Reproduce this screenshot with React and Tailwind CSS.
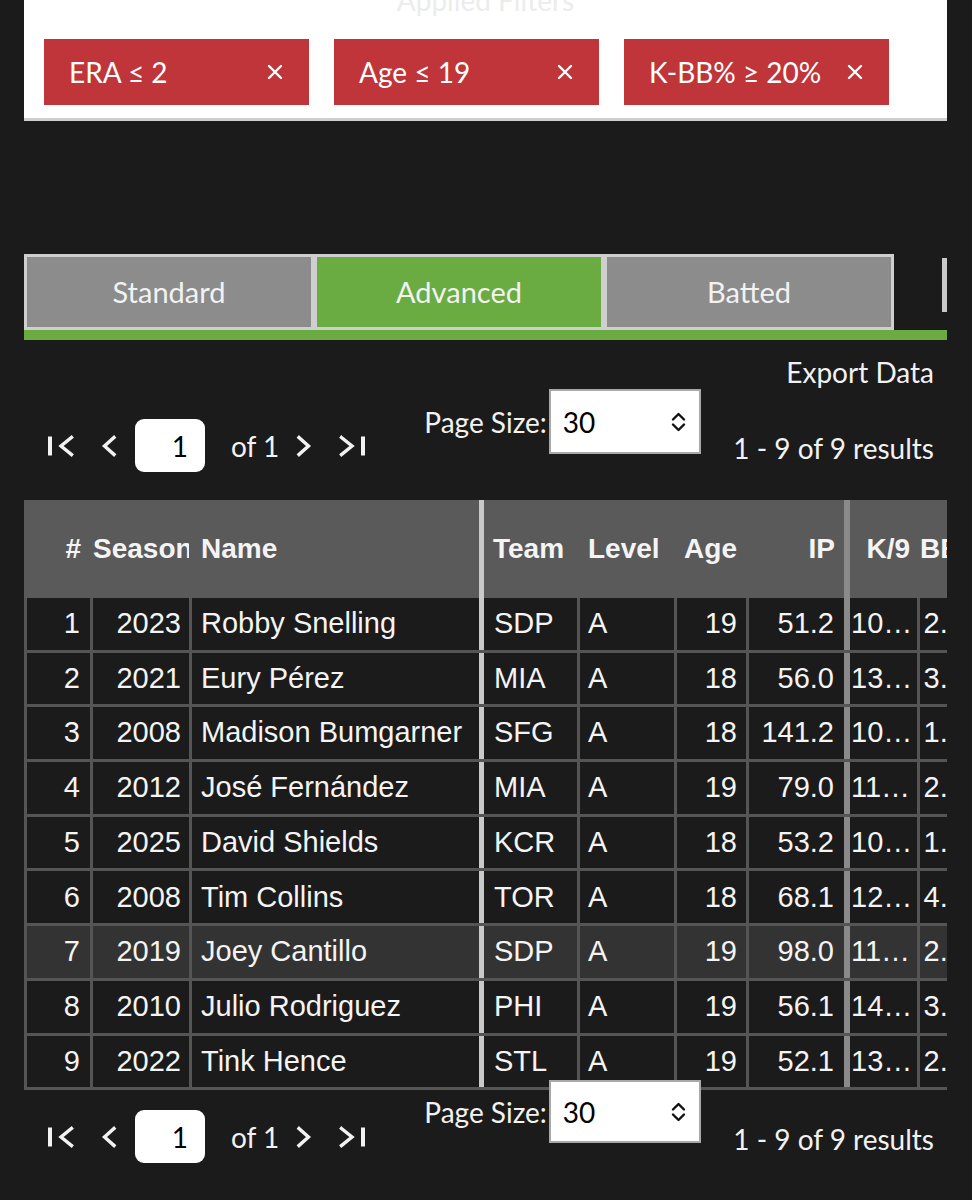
import { useState } from 'react'

const filtros = ['ERA ≤ 2', 'Age ≤ 19', 'K-BB% ≥ 20%']
const abas = ['Standard', 'Advanced', 'Batted']

const linhas = [
  [1, 2023, 'Robby Snelling', 'SDP', 'A', 19, '51.2', '10.56', '2.64'],
  [2, 2021, 'Eury Pérez', 'MIA', 'A', 18, '56.0', '13.18', '3.21'],
  [3, 2008, 'Madison Bumgarner', 'SFG', 'A', 18, '141.2', '10.34', '1.87'],
  [4, 2012, 'José Fernández', 'MIA', 'A', 19, '79.0', '11.73', '2.51'],
  [5, 2025, 'David Shields', 'KCR', 'A', 18, '53.2', '10.96', '1.52'],
  [6, 2008, 'Tim Collins', 'TOR', 'A', 18, '68.1', '12.66', '4.23'],
  [7, 2019, 'Joey Cantillo', 'SDP', 'A', 19, '98.0', '11.39', '2.94'],
  [8, 2010, 'Julio Rodriguez', 'PHI', 'A', 19, '56.1', '14.12', '3.68'],
  [9, 2022, 'Tink Hence', 'STL', 'A', 19, '52.1', '13.44', '2.78'],
]

// largura, borda e alinhamento de cada coluna
const colunas = [
  { titulo: '#', w: 'w-[66px]', borda: 'border-r-[3px] border-[#555]', th: 'text-right pr-[9px]', td: 'text-right pr-[10px]' },
  { titulo: 'Season', w: 'w-[99px]', borda: 'border-r-[3px] border-[#555]', th: 'text-right pr-0', td: 'text-right pr-[8px]' },
  { titulo: 'Name', w: 'w-[292px]', borda: 'border-r-[5px] border-[#c9c9c9]', th: 'text-left pl-[9px]', td: 'text-left pl-[9px]' },
  { titulo: 'Team', w: 'w-[96px]', borda: 'border-r-[3px] border-[#555]', th: 'text-left pl-[9px]', td: 'text-left pl-[10px]' },
  { titulo: 'Level', w: 'w-[97px]', borda: 'border-r-[3px] border-[#555]', th: 'text-left pl-[8px]', td: 'text-left pl-[8px]' },
  { titulo: 'Age', w: 'w-[72px]', borda: 'border-r-[3px] border-[#555]', th: 'text-right pr-[9px]', td: 'text-right pr-[9px]' },
  { titulo: 'IP', w: 'w-[101px]', borda: 'border-r-[6px] border-[#8a8a8a]', th: 'text-right pr-[9px]', td: 'text-right pr-[10px]' },
  { titulo: 'K/9', w: 'w-[70px]', borda: 'border-r-[3px] border-[#555]', th: 'text-right pr-[7px]', td: 'text-left pl-[1px] pr-[2px]' },
  { titulo: 'BB/9', w: 'w-[70px]', borda: 'border-r-[3px] border-[#555]', th: 'text-right pr-[7px]', td: 'text-right pr-[7px]' },
]

function Chevron({ dir }) {
  return (
    <svg width="16" height="22" viewBox="0 0 16 22" fill="none" stroke="#f2f2f2" strokeWidth="3.4" strokeLinecap="square">
      {dir === 'left' ? <path d="M13 2.5 L3.5 11 L13 19.5" /> : <path d="M3 2.5 L12.5 11 L3 19.5" />}
    </svg>
  )
}

function Primeira() {
  return (
    <svg width="26" height="22" viewBox="0 0 26 22" fill="none" stroke="#f2f2f2" strokeWidth="3.4" strokeLinecap="square">
      <path d="M2 1.5 L2 20.5" strokeLinecap="butt" strokeWidth="4" />
      <path d="M23.5 2.5 L13 11 L23.5 19.5" />
    </svg>
  )
}

function Ultima() {
  return (
    <svg width="26" height="22" viewBox="0 0 26 22" fill="none" stroke="#f2f2f2" strokeWidth="3.4" strokeLinecap="square">
      <path d="M2.5 2.5 L13 11 L2.5 19.5" />
      <path d="M24 1.5 L24 20.5" strokeLinecap="butt" strokeWidth="4" />
    </svg>
  )
}

function Paginacao({ topo }) {
  const [pagina] = useState(1)
  return (
    <div className={`flex items-start pl-[48px] pr-[38px] ${topo ? '' : '-mt-[10px]'}`}>
      <div className="flex items-center mt-[30px]">
        <Primeira />
        <span className="ml-[27px]"><Chevron dir="left" /></span>
        <div className="ml-[18px] w-[70px] h-[53px] rounded-[9px] bg-white text-black text-[28px] flex items-center justify-end pr-[17px]">
          {pagina}
        </div>
        <span className="ml-[26px] text-[28px] text-[#f2f2f2] leading-[34px]">of 1</span>
        <span className="ml-[17px]"><Chevron dir="right" /></span>
        <span className="ml-[27px]"><Ultima /></span>
      </div>
      <div className="ml-[59px] flex items-center">
        <span className="text-[28px] text-[#f2f2f2] leading-[34px] mr-[2px]">Page Size:</span>
        <div className={`w-[152px] ${topo ? 'h-[65px]' : 'h-[63px]'} bg-white border-2 border-[#a9a9a9] flex items-center justify-between pl-[12px] pr-[12px]`}>
          <span className="text-[28px] text-black">30</span>
          <svg width="17" height="22" viewBox="0 0 17 22" fill="none" stroke="#111" strokeWidth="2.4" strokeLinecap="round" strokeLinejoin="round">
            <path d="M3 8.5 L8.5 3 L14 8.5" />
            <path d="M3 13.5 L8.5 19 L14 13.5" />
          </svg>
        </div>
      </div>
      <span className="ml-auto mt-[42px] text-[28px] text-[#f2f2f2] leading-[34px]">1 - 9 of 9 results</span>
    </div>
  )
}

export default function App() {
  const [abaAtiva, setAbaAtiva] = useState('Advanced')
  const [linhaHover] = useState(7)

  return (
    <div className="min-h-screen bg-[#1b1b1b] pb-[40px] font-['Lato',sans-serif] overflow-hidden">
      <div className="ml-[24px] mr-[25px]">
        {/* filtros aplicados */}
        <div className="-mt-[17px] bg-white border-b-[3px] border-[#cfcfcf] px-[20px] pb-[13px]">
          <h2 className="text-center text-[28px] leading-[34px] text-[#ececec]">Applied Filters</h2>
          <div className="mt-[22px] flex gap-[25px]">
            {filtros.map(f => (
              <div key={f} className="w-[265px] h-[66px] bg-[#bf3539] flex items-center justify-between pl-[25px] pr-[26px]">
                <span className="text-[28px] text-white leading-none">{f}</span>
                <svg width="16" height="16" viewBox="0 0 16 16" stroke="white" strokeWidth="2.4" strokeLinecap="round">
                  <path d="M2 2 L14 14 M14 2 L2 14" />
                </svg>
              </div>
            ))}
          </div>
        </div>

        {/* abas */}
        <div className="mt-[133px] flex">
          {abas.map(a => (
            <button
              key={a}
              onClick={() => setAbaAtiva(a)}
              className={`w-[290px] h-[76px] border-[3px] border-[#cfcfcf] text-[29px] text-[#f2f2f2] ${a === abaAtiva ? 'bg-[#6aac41]' : 'bg-[#8c8c8c]'}`}
            >
              {a}
            </button>
          ))}
          <div className="ml-auto mt-[4px] w-[5px] h-[54px] bg-[#c9c9c9] self-start" />
        </div>
        <div className="h-[10px] bg-[#6aac41]" />

        <div className="mt-[15px] flex justify-end pr-[13px]">
          <span className="text-[28px] text-[#f2f2f2] leading-[34px]">Export Data</span>
        </div>
      </div>

      <Paginacao topo />

      {/* tabela */}
      <div className="ml-[24px] mr-[25px] mt-[28px] overflow-hidden font-['Liberation_Sans',Arial,sans-serif] text-[#f4f4f4]">
        <div className="flex h-[98px] bg-[#5a5a5a] border-l-[3px] border-[#5a5a5a] w-max font-bold text-[28px]">
          {colunas.map(c => (
            <div
              key={c.titulo}
              className={`shrink-0 h-full flex items-center ${c.w} ${c.titulo === 'Name' || c.titulo === 'IP' ? c.borda : 'border-r-[3px] border-[#5a5a5a]'}`}
            >
              <span className={`block w-full overflow-hidden whitespace-nowrap ${c.th}`}>{c.titulo}</span>
            </div>
          ))}
        </div>
        {linhas.map(l => (
          <div
            key={l[0]}
            className={`flex h-[54.7px] w-max border-l-[3px] border-b-[3px] border-[#555] text-[29px] ${l[0] === linhaHover ? 'bg-[#333333]' : 'bg-[#1b1b1b]'}`}
          >
            {colunas.map((c, i) => (
              <div key={c.titulo} className={`shrink-0 h-full flex items-center ${c.w} ${c.borda}`}>
                <span className={`block w-full truncate ${c.td}`}>{l[i]}</span>
              </div>
            ))}
          </div>
        ))}
      </div>

      <Paginacao />
    </div>
  )
}
